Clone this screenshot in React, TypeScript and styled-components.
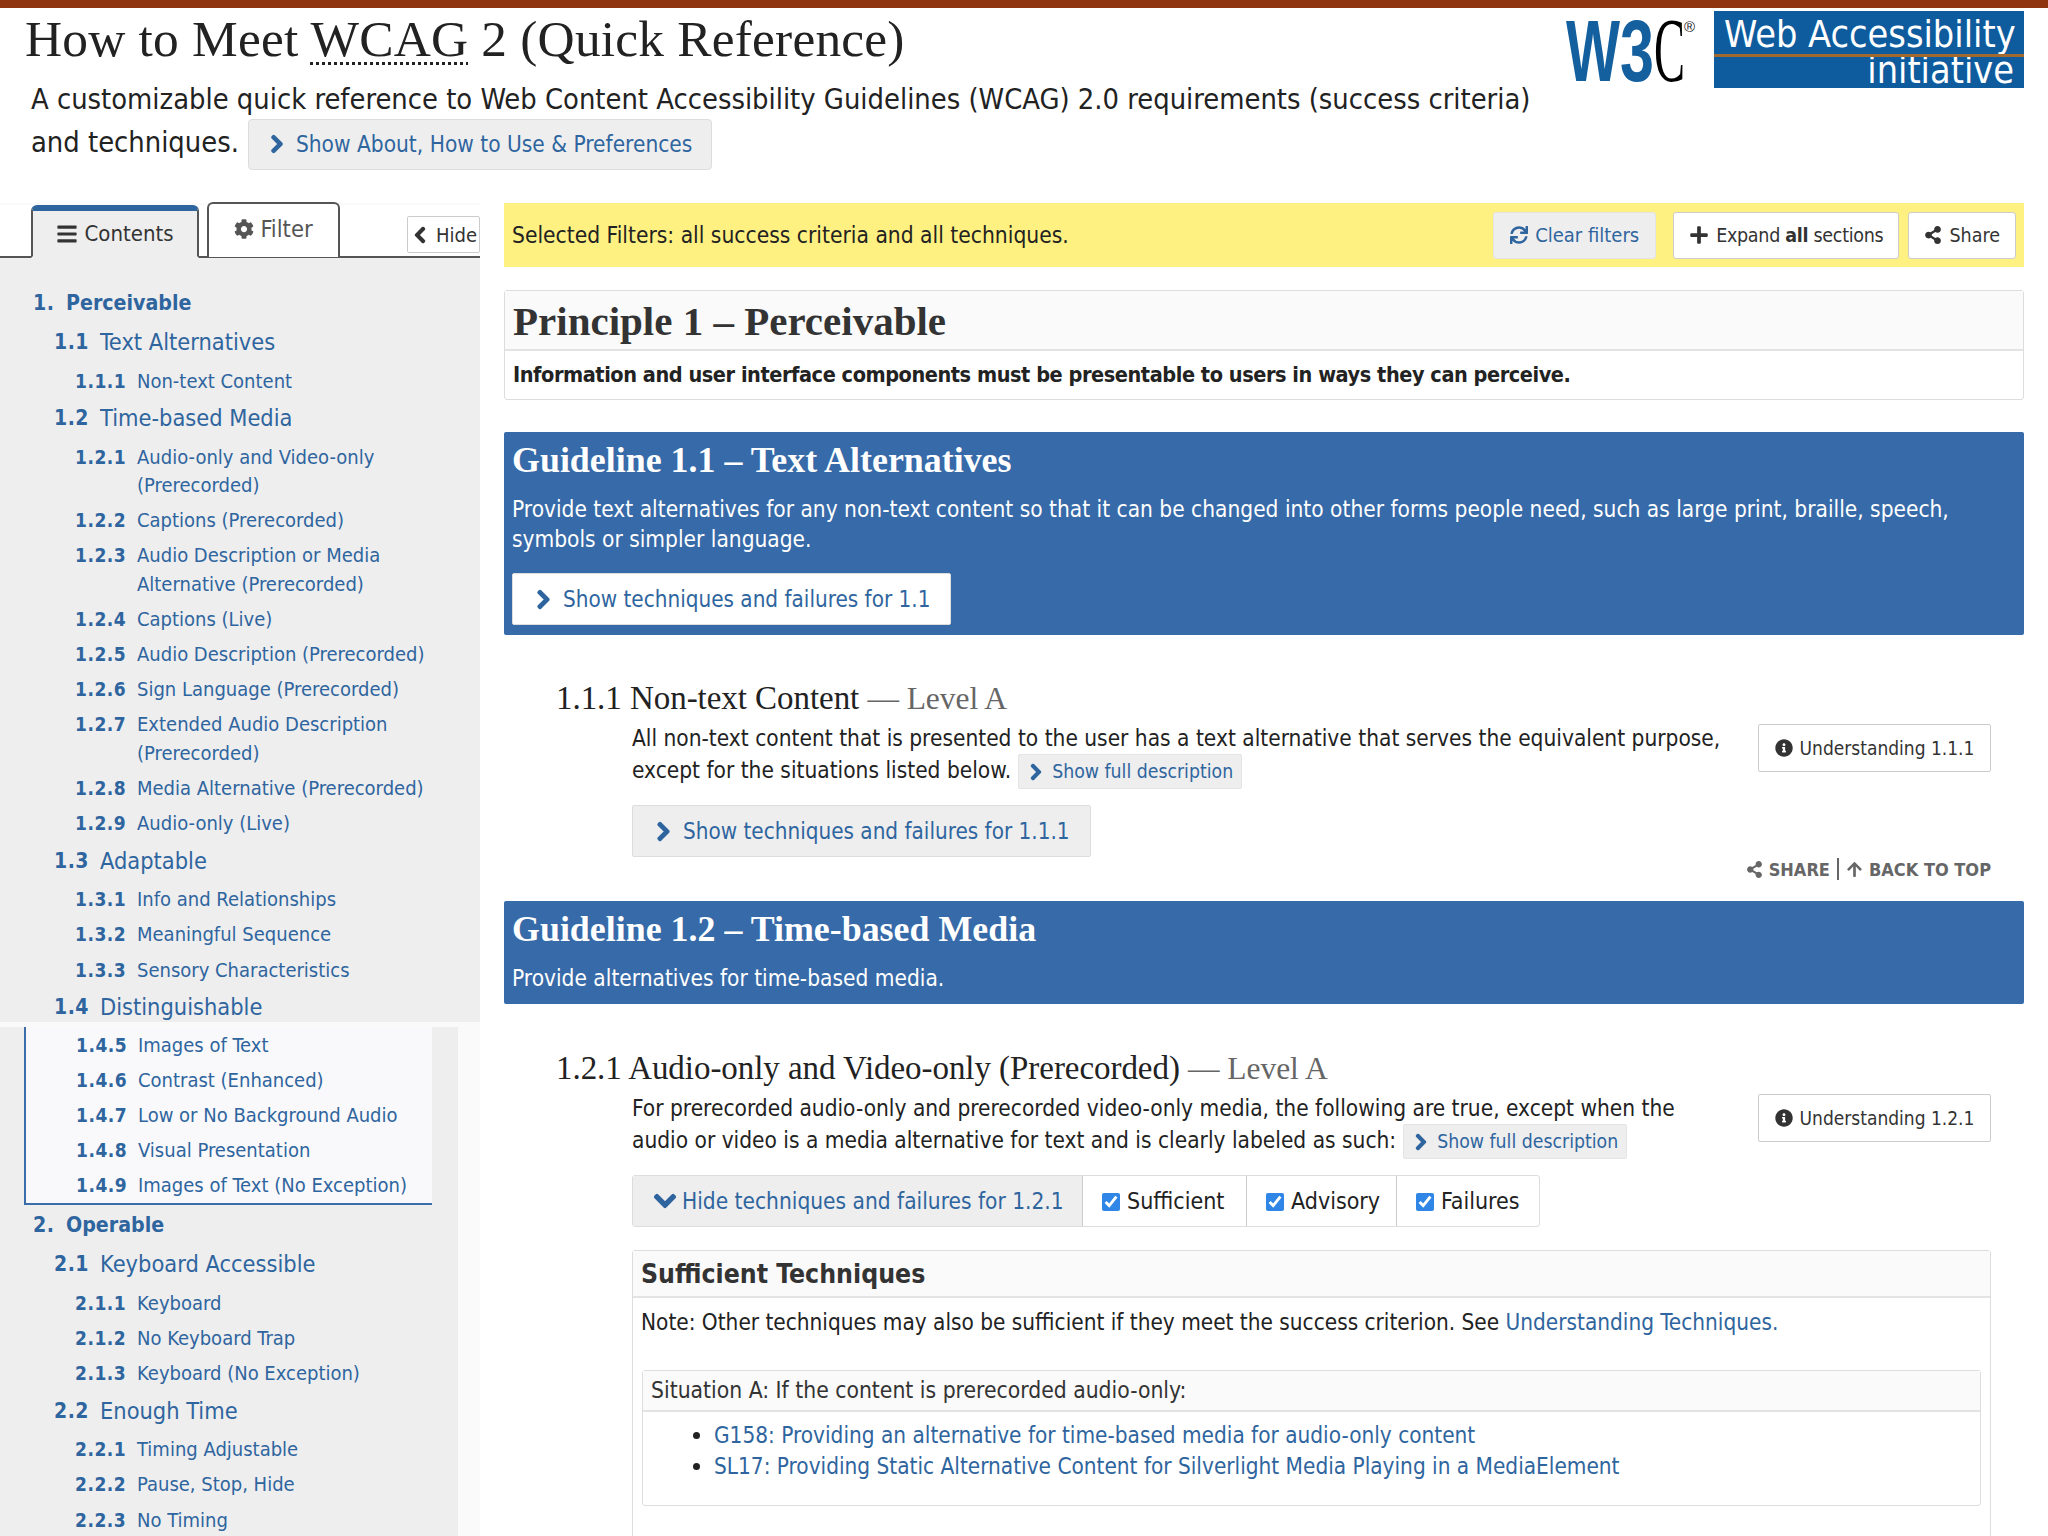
import React from 'react';
import styled, { createGlobalStyle } from 'styled-components';
import {
  FaArrowUp,
  FaBars,
  FaChevronDown,
  FaChevronLeft,
  FaChevronRight,
  FaCog,
  FaInfoCircle,
  FaPlus,
  FaShareAlt,
  FaSync,
} from 'react-icons/fa';

const sans = '"DejaVu Sans Condensed", "DejaVu Sans", Tahoma, sans-serif';
const serif = '"Liberation Serif", "Times New Roman", serif';
const blue = '#2f659e';

const GlobalStyle = createGlobalStyle`
  html, body {
    margin: 0;
    height: 1536px;
    overflow: hidden;
    background: #fff;
  }
  body {
    font-family: ${sans};
    color: #222;
  }
  * { box-sizing: border-box; }
`;

const ChevronRight = styled(FaChevronRight)`
  stroke: currentColor;
  stroke-width: 36px;
`;

const ChevronLeft = styled(FaChevronLeft)`
  stroke: currentColor;
  stroke-width: 36px;
`;

const ChevronDown = styled(FaChevronDown)`
  stroke: currentColor;
  stroke-width: 36px;
`;

const Page = styled.div`
  height: 1536px;
  overflow: hidden;
  border-top: 8px solid #8f3510;
`;

const Header = styled.header`
  display: flex;
  justify-content: space-between;
  height: 195px;
  padding-right: 24px;
`;

const Intro = styled.div`
  width: 1540px;
`;

const Title = styled.h1`
  margin: 0 0 8px 25px;
  font: 400 51.4px/62px ${serif};
  color: #222;
  letter-spacing: 0.2px;
  abbr {
    text-decoration: underline dotted #222 3px;
    text-underline-offset: 6px;
  }
`;

const Lead = styled.p`
  margin: 0 0 0 31px;
  font-size: 28.8px;
  line-height: 43px;
`;

const AboutButton = styled.button`
  display: inline-flex;
  align-items: center;
  gap: 9px;
  height: 51px;
  margin: -6px 0 -6px 9px;
  padding: 0 19px 0 18px;
  vertical-align: middle;
  border: 1px solid #ddd;
  border-radius: 4px;
  background: #eeeeef;
  color: ${blue};
  font: 22.5px ${sans};
`;

const Logos = styled.div`
  display: flex;
  gap: 16px;
  padding-top: 3px;
`;

const W3cLogo = styled.svg`
  display: block;
  width: 134px;
  height: 72px;
  margin-top: 3px;
  overflow: visible;
`;

const WaiLogo = styled.div`
  position: relative;
  width: 310px;
  height: 77px;
  padding: 5px 10px 0;
  background: #0e5c9e;
  color: #fff;
  text-align: right;
  font: 37.5px/36px ${sans};
  white-space: nowrap;
  &::after {
    content: '';
    position: absolute;
    left: 0;
    right: 0;
    top: 43px;
    height: 3px;
    background: #a2692e;
  }
`;

const Layout = styled.div`
  display: grid;
  grid-template-columns: 480px 1520px;
  gap: 24px;
`;

const Sidebar = styled.aside`
  padding-top: 2px;
  background: #fafafb;
`;

const TabRow = styled.div`
  display: flex;
  align-items: flex-end;
  height: 53px;
  padding-left: 31px;
  background: #fff;
  border-bottom: 2px solid #555;
`;

const Tab = styled.div<{ $active?: boolean }>`
  display: flex;
  align-items: center;
  justify-content: center;
  gap: 6px;
  height: ${(p) => (p.$active ? 53 : 55)}px;
  width: ${(p) => (p.$active ? 168 : 133)}px;
  margin: 0 8px -2px 0;
  padding-bottom: ${(p) => (p.$active ? 0 : 4)}px;
  border: 2px solid #555;
  border-top: ${(p) => (p.$active ? `6px solid #2f659e` : '2px solid #555')};
  border-bottom: ${(p) => (p.$active ? '2px solid #eeeeef' : '0')};
  border-radius: 6px 6px 0 0;
  background: ${(p) => (p.$active ? '#eeeeef' : '#fff')};
  color: ${(p) => (p.$active ? '#333' : '#555')};
  font-size: ${(p) => (p.$active ? 22 : 23.5)}px;
  transform: translateY(${(p) => (p.$active ? 0 : -1)}px);
`;

const HideButton = styled.button`
  display: inline-flex;
  align-items: center;
  justify-content: space-between;
  width: 73px;
  height: 37px;
  margin: 0 0 3px auto;
  padding: 0 2px 0 3px;
  border: 1px solid #ccc;
  border-radius: 2px;
  background: #fff;
  color: #333;
  font: 20px ${sans};
`;

const NavTop = styled.nav`
  height: 764px;
  padding-top: 25px;
  background: #eeeeef;
  a:last-child {
    min-height: 36px;
    padding-top: 5px;
    padding-bottom: 0;
    line-height: 31px;
  }
`;

const NavRest = styled.nav`
  width: 458px;
  margin-top: 7px;
  padding-bottom: 40px;
  background: #eeeeef;
`;

const ViewportBox = styled.div`
  width: 408px;
  height: 178px;
  margin-left: 24px;
  background: #f9f9fb;
  border-left: 2px solid #3b6ea8;
  border-bottom: 2px solid #3b6ea8;
  a:first-child {
    margin-top: -2px;
  }
`;

const levels = {
  1: { left: 33, num: 33, size: 21.2, numSize: 21.2, height: 39, weight: 700, line: 39 },
  2: { left: 54, num: 46, size: 23.4, numSize: 21, height: 41, weight: 400, line: 41 },
  3: { left: 75, num: 62, size: 20, numSize: 19, height: 35.2, weight: 400, line: 28.2 },
};

const NavRow = styled.a<{ $level: 1 | 2 | 3; $shift?: number }>`
  display: flex;
  align-items: flex-start;
  min-height: ${(p) => levels[p.$level].height}px;
  padding: ${(p) => (levels[p.$level].height - levels[p.$level].line) / 2}px 12px
    ${(p) => (levels[p.$level].height - levels[p.$level].line) / 2}px
    ${(p) => levels[p.$level].left - (p.$shift ?? 0)}px;
  color: ${blue};
  font-size: ${(p) => levels[p.$level].size}px;
  font-weight: ${(p) => levels[p.$level].weight};
  line-height: ${(p) => levels[p.$level].line}px;
`;

const NavNum = styled.span<{ $level: 1 | 2 | 3 }>`
  flex: none;
  width: ${(p) => levels[p.$level].num}px;
  font-size: ${(p) => levels[p.$level].numSize}px;
  font-weight: 700;
  letter-spacing: 0.5px;
`;

type NavItem = [1 | 2 | 3, string, string];

const navTop: NavItem[] = [
  [1, '1.', 'Perceivable'],
  [2, '1.1', 'Text Alternatives'],
  [3, '1.1.1', 'Non-text Content'],
  [2, '1.2', 'Time-based Media'],
  [3, '1.2.1', 'Audio-only and Video-only (Prerecorded)'],
  [3, '1.2.2', 'Captions (Prerecorded)'],
  [3, '1.2.3', 'Audio Description or Media Alternative (Prerecorded)'],
  [3, '1.2.4', 'Captions (Live)'],
  [3, '1.2.5', 'Audio Description (Prerecorded)'],
  [3, '1.2.6', 'Sign Language (Prerecorded)'],
  [3, '1.2.7', 'Extended Audio Description (Prerecorded)'],
  [3, '1.2.8', 'Media Alternative (Prerecorded)'],
  [3, '1.2.9', 'Audio-only (Live)'],
  [2, '1.3', 'Adaptable'],
  [3, '1.3.1', 'Info and Relationships'],
  [3, '1.3.2', 'Meaningful Sequence'],
  [3, '1.3.3', 'Sensory Characteristics'],
  [2, '1.4', 'Distinguishable'],
];

const navViewport: NavItem[] = [
  [3, '1.4.5', 'Images of Text'],
  [3, '1.4.6', 'Contrast (Enhanced)'],
  [3, '1.4.7', 'Low or No Background Audio'],
  [3, '1.4.8', 'Visual Presentation'],
  [3, '1.4.9', 'Images of Text (No Exception)'],
];

const navRest: NavItem[] = [
  [1, '2.', 'Operable'],
  [2, '2.1', 'Keyboard Accessible'],
  [3, '2.1.1', 'Keyboard'],
  [3, '2.1.2', 'No Keyboard Trap'],
  [3, '2.1.3', 'Keyboard (No Exception)'],
  [2, '2.2', 'Enough Time'],
  [3, '2.2.1', 'Timing Adjustable'],
  [3, '2.2.2', 'Pause, Stop, Hide'],
  [3, '2.2.3', 'No Timing'],
];

const Main = styled.main`
  display: flex;
  flex-direction: column;
`;

const FilterBar = styled.div`
  display: flex;
  align-items: center;
  height: 64px;
  padding: 0 8px;
  background: #fff181;
  font-size: 22.6px;
`;

const FilterText = styled.span`
  margin-right: auto;
`;

const BarButton = styled.button<{ $muted?: boolean }>`
  display: inline-flex;
  align-items: center;
  gap: 7px;
  height: 47px;
  margin-left: ${(p) => (p.$muted ? 0 : 9)}px;
  margin-right: ${(p) => (p.$muted ? 8 : 0)}px;
  padding: 0 ${(p) => (p.$muted ? 16 : 15)}px;
  border: 1px solid ${(p) => (p.$muted ? '#e4e4e0' : '#ccc')};
  border-radius: 3px;
  background: ${(p) => (p.$muted ? '#eeeeef' : '#fff')};
  color: ${(p) => (p.$muted ? blue : '#333')};
  font: ${(p) => (p.$muted ? 20 : 19.5)}px ${sans};
  white-space: nowrap;
`;

const ExpandLabel = styled.span`
  letter-spacing: -0.3px;
  b { font-weight: 700; }
`;

const PrincipleBox = styled.section`
  height: 110px;
  margin-top: 23px;
  border: 1px solid #ddd;
  border-radius: 3px;
`;

const PrincipleHead = styled.h2`
  height: 60px;
  margin: 0;
  padding-left: 8px;
  background: #fafafa;
  border-bottom: 2px solid #e3e3e3;
  color: #333;
  font: 700 41px/60px ${serif};
`;

const PrincipleBody = styled.p`
  margin: 0;
  padding-left: 8px;
  font-size: 21.5px;
  font-weight: 700;
  letter-spacing: -0.44px;
  line-height: 47px;
  color: #222;
`;

const GuidelineBox = styled.section<{ $first?: boolean }>`
  margin-top: ${(p) => (p.$first ? 32 : 20)}px;
  padding: 8px 8px ${(p) => (p.$first ? 10 : 11)}px;
  background: #376aa8;
  border-radius: 2px;
  color: #fff;
`;

const GuidelineTitle = styled.h2`
  margin: 0;
  font: 700 35.9px/40px ${serif};
`;

const GuidelineText = styled.p`
  margin: 14px 0 0;
  font-size: 22.5px;
  line-height: 30px;
`;

const TechniqueToggle = styled.button<{ $white?: boolean }>`
  display: inline-flex;
  align-items: center;
  gap: 9px;
  height: 52px;
  margin-top: 19px;
  padding: 0 20px 0 20px;
  border: 1px solid #ddd;
  border-radius: 2px;
  background: ${(p) => (p.$white ? '#fff' : '#eeeeef')};
  color: ${blue};
  font: 22.3px ${sans};
  white-space: nowrap;
`;

const Criterion = styled.section<{ $top: number }>`
  margin-top: ${(p) => p.$top}px;
  padding: 0 33px 0 52px;
`;

const CriterionTitle = styled.h3`
  margin: 0;
  font: 400 33px/40px ${serif};
  letter-spacing: -0.05px;
  color: #222;
  span {
    color: #666;
    font-size: 31.5px;
  }
`;

const CriterionRow = styled.div`
  display: flex;
  justify-content: space-between;
  padding-left: 76px;
  margin-top: 3px;
`;

const CriterionText = styled.p`
  width: 1100px;
  height: 64px;
  margin: 0;
  font-size: 22.5px;
  line-height: 32px;
`;

const MiniButton = styled.button`
  display: inline-flex;
  align-items: center;
  gap: 7px;
  height: 35px;
  margin: -2px 0 -2px 7px;
  padding: 0 8px;
  vertical-align: middle;
  border: 1px solid #e4e4e4;
  border-radius: 2px;
  background: #eeeeef;
  color: ${blue};
  font: 19.3px ${sans};
`;

const UnderstandingButton = styled.button`
  display: inline-flex;
  align-items: center;
  justify-content: center;
  gap: 7px;
  width: 233px;
  height: 48px;
  margin-top: 2px;
  border: 1px solid #ccc;
  border-radius: 2px;
  background: #fff;
  color: #333;
  font: 19px ${sans};
`;

const Indented = styled.div`
  padding-left: 76px;
`;

const ShareRow = styled.div`
  display: flex;
  justify-content: flex-end;
  align-items: center;
  gap: 7px;
  height: 24px;
  color: #666;
  font-size: 18px;
  font-weight: 700;
`;

const ShareLink = styled.span`
  display: inline-flex;
  align-items: center;
  gap: 6px;
`;

const ShareDivider = styled.span`
  width: 2px;
  height: 22px;
  background: #666;
`;

const ToggleGroup = styled.div`
  display: flex;
  width: 908px;
  height: 52px;
  margin-top: 19px;
  border: 1px solid #ddd;
  border-radius: 3px;
`;

const HideToggle = styled.span`
  display: flex;
  align-items: center;
  gap: 5px;
  width: 449px;
  padding-left: 20px;
  background: #eeeeef;
  color: ${blue};
  font-size: 22.5px;
  white-space: nowrap;
`;

const TypeCheck = styled.label<{ $width: number }>`
  display: flex;
  align-items: center;
  gap: 7px;
  width: ${(p) => p.$width}px;
  padding-left: 19px;
  border-left: 1px solid #ccc;
  font-size: 23px;
  input {
    width: 18px;
    height: 18px;
    margin: 2px 0 0;
    accent-color: #2f86e6;
  }
`;

const TechBox = styled.div`
  margin-top: 23px;
  height: 400px;
  border: 1px solid #ddd;
  border-radius: 3px;
`;

const TechHead = styled.h4`
  height: 47px;
  margin: 0;
  padding-left: 8px;
  background: #fafafa;
  border-bottom: 2px solid #e3e3e3;
  color: #333;
  font: 700 26.4px/45px ${sans};
`;

const TechNote = styled.p`
  margin: 8px 0 0;
  padding-left: 8px;
  font-size: 22.4px;
  line-height: 32px;
`;

const BodyLink = styled.a`
  color: ${blue};
`;

const Situation = styled.div`
  height: 136px;
  margin: 32px 9px 0;
  border: 1px solid #ddd;
  border-radius: 3px;
`;

const SituationHead = styled.div`
  height: 41px;
  padding-left: 8px;
  background: #fafafa;
  border-bottom: 2px solid #e3e3e3;
  font-size: 22.7px;
  line-height: 39px;
  color: #333;
`;

const SituationList = styled.ul`
  margin: 0;
  padding: 8px 0 0 71px;
  font-size: 22.4px;
  line-height: 31px;
  li::marker { color: #222; }
`;

const renderNav = (items: NavItem[], shift = 0) =>
  items.map(([level, num, label]) => (
    <NavRow key={num} $level={level} $shift={shift}>
      <NavNum $level={level}>{num}</NavNum>
      <span>{label}</span>
    </NavRow>
  ));

const App = () => (
  <Page>
    <GlobalStyle />
    <Header>
      <Intro>
        <Title>
          How to Meet <abbr>WCAG</abbr> 2 (Quick Reference)
        </Title>
        <Lead>
          A customizable quick reference to Web Content Accessibility Guidelines (WCAG) 2.0
          requirements (success criteria) and techniques.
          <AboutButton>
            <ChevronRight size={20} />
            Show About, How to Use &amp; Preferences
          </AboutButton>
        </Lead>
      </Intro>
      <Logos>
        <W3cLogo viewBox="0 0 134 72">
          <text x="2" y="67" fontFamily="Liberation Sans" fontWeight="700" fontSize="88" fill="#14609f" textLength="54" lengthAdjust="spacingAndGlyphs">
            W
          </text>
          <text x="56" y="67" fontFamily="Liberation Sans" fontWeight="700" fontSize="88" fill="#14609f" textLength="34" lengthAdjust="spacingAndGlyphs">
            3
          </text>
          <text x="90" y="67" fontFamily="Liberation Serif" fontSize="90" fill="#000" textLength="31" lengthAdjust="spacingAndGlyphs">
            C
          </text>
          <text x="120" y="18" fontFamily="Liberation Sans" fontSize="15" fill="#222">
            ®
          </text>
        </W3cLogo>
        <WaiLogo>
          Web Accessibility
          <br />
          initiative
        </WaiLogo>
      </Logos>
    </Header>
    <Layout>
      <Sidebar>
        <TabRow>
          <Tab $active>
            <FaBars size={22} />
            Contents
          </Tab>
          <Tab>
            <FaCog size={20} />
            Filter
          </Tab>
          <HideButton>
            <ChevronLeft size={18} />
            Hide
          </HideButton>
        </TabRow>
        <NavTop>{renderNav(navTop)}</NavTop>
        <NavRest>
          <ViewportBox>{renderNav(navViewport, 25)}</ViewportBox>
          {renderNav(navRest)}
        </NavRest>
      </Sidebar>
      <Main>
        <FilterBar>
          <FilterText>Selected Filters: all success criteria and all techniques.</FilterText>
          <BarButton $muted>
            <FaSync size={18} />
            Clear filters
          </BarButton>
          <BarButton>
            <FaPlus size={20} />
            <ExpandLabel>
              Expand <b>all</b> sections
            </ExpandLabel>
          </BarButton>
          <BarButton>
            <FaShareAlt size={18} />
            Share
          </BarButton>
        </FilterBar>

        <PrincipleBox>
          <PrincipleHead>Principle 1 – Perceivable</PrincipleHead>
          <PrincipleBody>
            Information and user interface components must be presentable to users in ways they can
            perceive.
          </PrincipleBody>
        </PrincipleBox>

        <GuidelineBox $first>
          <GuidelineTitle>Guideline 1.1 – Text Alternatives</GuidelineTitle>
          <GuidelineText>
            Provide text alternatives for any non-text content so that it can be changed into other
            forms people need, such as large print, braille, speech, symbols or simpler language.
          </GuidelineText>
          <TechniqueToggle $white>
            <ChevronRight size={21} />
            Show techniques and failures for 1.1
          </TechniqueToggle>
        </GuidelineBox>

        <Criterion $top={43}>
          <CriterionTitle>
            1.1.1 Non-text Content <span>— Level A</span>
          </CriterionTitle>
          <CriterionRow>
            <CriterionText>
              All non-text content that is presented to the user has a text alternative that serves
              the equivalent purpose, except for the situations listed below.
              <MiniButton>
                <ChevronRight size={18} />
                Show full description
              </MiniButton>
            </CriterionText>
            <UnderstandingButton>
              <FaInfoCircle size={18} />
              Understanding 1.1.1
            </UnderstandingButton>
          </CriterionRow>
          <Indented>
            <TechniqueToggle>
              <ChevronRight size={21} />
              Show techniques and failures for 1.1.1
            </TechniqueToggle>
          </Indented>
          <ShareRow>
            <ShareLink>
              <FaShareAlt size={17} />
              SHARE
            </ShareLink>
            <ShareDivider />
            <ShareLink>
              <FaArrowUp size={17} />
              BACK TO TOP
            </ShareLink>
          </ShareRow>
        </Criterion>

        <GuidelineBox>
          <GuidelineTitle>Guideline 1.2 – Time-based Media</GuidelineTitle>
          <GuidelineText>Provide alternatives for time-based media.</GuidelineText>
        </GuidelineBox>

        <Criterion $top={44}>
          <CriterionTitle>
            1.2.1 Audio-only and Video-only (Prerecorded) <span>— Level A</span>
          </CriterionTitle>
          <CriterionRow>
            <CriterionText>
              For prerecorded audio-only and prerecorded video-only media, the following are true,
              except when the audio or video is a media alternative for text and is clearly labeled
              as such:
              <MiniButton>
                <ChevronRight size={18} />
                Show full description
              </MiniButton>
            </CriterionText>
            <UnderstandingButton>
              <FaInfoCircle size={18} />
              Understanding 1.2.1
            </UnderstandingButton>
          </CriterionRow>
          <Indented>
            <ToggleGroup>
              <HideToggle>
                <ChevronDown size={24} />
                Hide techniques and failures for 1.2.1
              </HideToggle>
              <TypeCheck $width={164}>
                <input type="checkbox" checked readOnly />
                Sufficient
              </TypeCheck>
              <TypeCheck $width={150}>
                <input type="checkbox" checked readOnly />
                Advisory
              </TypeCheck>
              <TypeCheck $width={143}>
                <input type="checkbox" checked readOnly />
                Failures
              </TypeCheck>
            </ToggleGroup>
            <TechBox>
              <TechHead>Sufficient Techniques</TechHead>
              <TechNote>
                Note: Other techniques may also be sufficient if they meet the success criterion. See{' '}
                <BodyLink>Understanding Techniques.</BodyLink>
              </TechNote>
              <Situation>
                <SituationHead>Situation A: If the content is prerecorded audio-only:</SituationHead>
                <SituationList>
                  <li>
                    <BodyLink>G158: Providing an alternative for time-based media for audio-only content</BodyLink>
                  </li>
                  <li>
                    <BodyLink>
                      SL17: Providing Static Alternative Content for Silverlight Media Playing in a
                      MediaElement
                    </BodyLink>
                  </li>
                </SituationList>
              </Situation>
            </TechBox>
          </Indented>
        </Criterion>
      </Main>
    </Layout>
  </Page>
);

export default App;
